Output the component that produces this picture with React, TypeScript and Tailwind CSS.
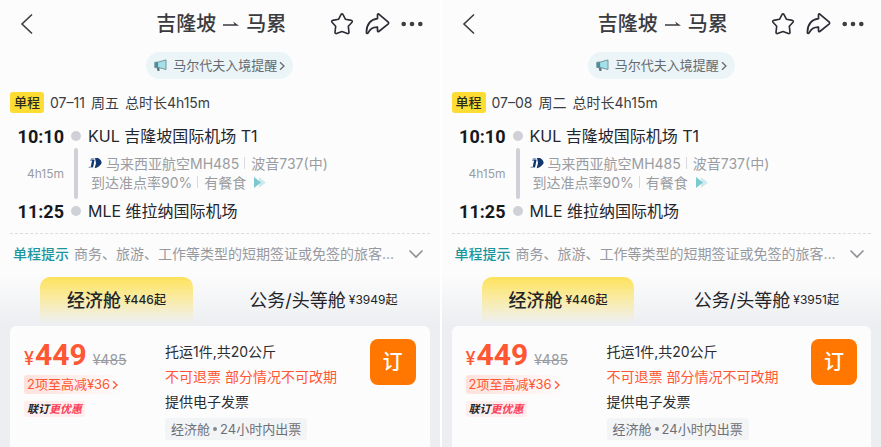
import React, { useState } from "react";

type Flight = {
  id: string;
  date: string;
  weekday: string;
  economyPrice: number;
  businessPrice: number;
};

const flights: Flight[] = [
  {
    id: "0711",
    date: "07–11",
    weekday: "周五",
    economyPrice: 446,
    businessPrice: 3949,
  },
  {
    id: "0708",
    date: "07–08",
    weekday: "周二",
    economyPrice: 446,
    businessPrice: 3951,
  },
];

const BackIcon = () => (
  <svg width="14" height="22" viewBox="0 0 14 22" fill="none">
    <path d="M12 1.5 2 11l10 9.5" stroke="#3c3d41" strokeWidth="1.6" />
  </svg>
);

const StarIcon = () => (
  <svg width="24" height="24" viewBox="0 0 24 24" fill="none">
    <path
      d="M11.100 2.400Q12 1.400 12.900 2.400L15.500 7.300 21.400 8.400Q22.900 8.900 22 10.200L18.300 14.200 19 20.300Q18.800 21.900 17.400 21.500L12 19.500 6.600 21.500Q5.200 21.900 5 20.300L5.700 14.200 2 10.200Q1.100 8.900 2.600 8.400L8.500 7.300Z"
      stroke="#2b2c35"
      strokeWidth="1.600"
      strokeLinejoin="round"
    />
  </svg>
);

const ShareIcon = () => (
  <svg width="25" height="24" viewBox="0 0 25 24" fill="none">
    <path
      d="M12.500 2.600q.2-1.100 1.300-.5l9.200 7.700q1.200 1.200 0 2.300l-9.200 7.400q-1.100.6-1.300-.6v-3.700c-4.200-.2-7.200 1.300-9.400 5.600-.5 1-1.700.9-1.700-.4.100-7.800 4.100-12.700 11.100-13.700Z"
      stroke="#2b2c35"
      strokeWidth="1.700"
      strokeLinejoin="round"
    />
  </svg>
);

const MoreIcon = () => (
  <svg width="22" height="6" viewBox="0 0 22 6" fill="#3c3d41">
    <circle cx="2.700" cy="3" r="2.300" />
    <circle cx="11" cy="3" r="2.300" />
    <circle cx="19.300" cy="3" r="2.300" />
  </svg>
);

const HornIcon = () => (
  <svg width="13" height="13" viewBox="0 0 13 13" fill="none">
    <path d="M.8 3.300 4.500 3v5.500H.8Z" fill="#3f93a3" />
    <path d="M4.500 3 12 .9v9.600L4.500 8.500Z" fill="#a5e0e9" />
    <path d="M2.500 8.500h3V12h-2Z" fill="#5d7780" />
    <path
      d="M.8 3.300 4.500 3 12 .9v9.600L4.500 8.500H.8V3.300Z"
      stroke="#6b8d95"
      strokeWidth=".9"
      strokeLinejoin="round"
    />
  </svg>
);

const ChevronRight = ({ color }: { color: string }) => (
  <svg width="6" height="10" viewBox="0 0 6 10" fill="none">
    <path d="m1 1.200 4 3.800-4 3.800" stroke={color} strokeWidth="1.300" />
  </svg>
);

const ChevronDown = () => (
  <svg width="16" height="10" viewBox="0 0 16 10" fill="none">
    <path d="m1.500 1.500 6.500 6.500 6.500-6.500" stroke="#8d9096" strokeWidth="1.600" />
  </svg>
);

const AirlineLogo = () => (
  <svg width="14" height="11" viewBox="0 0 14 11">
    <path
      d="M7 0h3c2.200 1 3.500 2.700 3.700 5-1.300 2.700-3.500 4.300-7 5.200L8 5Z"
      fill="#12366f"
    />
    <path d="M3 .3h3.500L5 9.800H.2l.8-1h2.200L4 3H2Z" fill="#7d95b8" />
    <path d="M4.200 2h2.300L5 9H2.800Z" fill="#12366f" />
  </svg>
);

const FastIcon = () => (
  <svg width="12" height="11" viewBox="0 0 12 11">
    <path d="m5 0 7 5.500L5 11Z" fill="#cdebee" />
    <path d="m0 0 7 5.500L0 11Z" fill="#7cc9d1" />
  </svg>
);

const Separator = () => (
  <span className="ml-[5px] mr-[6px] h-3 w-px bg-[#d9dade]" />
);

const Stop = ({ time, place }: { time: string; place: string }) => (
  <div className="flex h-6 items-center">
    <time className="w-14 text-right font-[Roboto] text-[18px] font-bold text-[#17181c]">
      {time}
    </time>
    <span className="mx-[7px] size-[10px] rounded-full bg-[#d0d1d8]" />
    <span className="text-base text-[#24262d]">{place}</span>
  </div>
);

const FlightPanel: React.FC<{ flight: Flight }> = ({ flight }) => {
  const [cabin, setCabin] = useState("economy");
  const [favorite, setFavorite] = useState(false);

  const cabins = [
    { key: "economy", name: "经济舱", price: flight.economyPrice },
    { key: "business", name: "公务/头等舱", price: flight.businessPrice },
  ];

  return (
    <section className="flex min-w-0 flex-col bg-[#eceef1]">
      <div className="bg-[#fcfcfc] px-2">
        <header className="grid h-12 grid-cols-[1fr_auto_1fr] items-center pl-3 pr-[9px]">
          <button aria-label="返回" className="justify-self-start">
            <BackIcon />
          </button>
          <h1 className="flex items-center gap-[7px] text-xl font-medium text-[#3a3b3f]">
            吉隆坡
            <svg width="16" height="8" viewBox="0 0 16 8">
              <path d="M0 4.200h11.500L10 1.500l6 4.300H0Z" fill="#3a3b3f" />
            </svg>
            马累
          </h1>
          <div className="flex items-center gap-[11px] justify-self-end">
            <button
              aria-label="收藏"
              aria-pressed={favorite}
              onClick={() => setFavorite(!favorite)}
            >
              <StarIcon />
            </button>
            <button aria-label="分享">
              <ShareIcon />
            </button>
            <button aria-label="更多">
              <MoreIcon />
            </button>
          </div>
        </header>

        <div className="flex justify-center pt-1">
          <a
            href="#entry"
            className="flex h-[27px] items-center gap-[2px] rounded-full bg-[#ebf5f7] px-2 text-[13px] text-[#666a70]"
          >
            <HornIcon />
            <span className="ml-1">马尔代夫入境提醒</span>
            <ChevronRight color="#666a70" />
          </a>
        </div>

        <div className="mt-[13px] flex h-[21px] items-center gap-[6px] pl-[2px] text-sm text-[#3b3d43]">
          <span className="flex h-full items-center rounded-[3px] bg-[#fddd33] px-1 text-[13px] font-medium text-[#2b2a20]">
            单程
          </span>
          <span>{flight.date}</span>
          <span>{flight.weekday}</span>
          <span>总时长4h15m</span>
        </div>

        <div className="mt-[11px]">
          <Stop time="10:10" place="KUL 吉隆坡国际机场 T1" />
          <div className="flex h-[51px] items-stretch">
            <span className="w-14 self-center text-right text-xs text-[#9a9ca2]">
              4h15m
            </span>
            <span className="mx-[10px] w-1 rounded-full bg-[#d0d1d8]" />
            <div className="flex flex-col justify-center pb-[2px] text-sm leading-[19px] text-[#9a9ca2]">
              <div className="flex items-center">
                <AirlineLogo />
                <span className="ml-1">马来西亚航空MH485</span>
                <Separator />
                <span>波音737(中)</span>
              </div>
              <div className="flex items-center pl-[3px]">
                <span>到达准点率90%</span>
                <Separator />
                <span className="mr-2">有餐食</span>
                <FastIcon />
              </div>
            </div>
          </div>
          <Stop time="11:25" place="MLE 维拉纳国际机场" />
        </div>

        <div className="mx-[2px] mt-[10px] border-t border-dashed border-[#dcdde0]" />

        <div className="flex h-10 items-center gap-[5px] pl-[5px] pr-2 text-sm">
          <strong className="shrink-0 font-medium text-[#1b969f]">
            单程提示
          </strong>
          <p className="flex-1 whitespace-nowrap text-[#97999f]">
            商务、旅游、工作等类型的短期签证或免签的旅客...
          </p>
          <button aria-label="展开" className="shrink-0">
            <ChevronDown />
          </button>
        </div>
      </div>

      <div
        role="tablist"
        className="grid grid-cols-[153fr_227fr] bg-linear-to-b from-[#fcfcfc] to-[#eceef1] pb-[3px] pl-10 pr-5 pt-[3px]"
      >
        {cabins.map(({ key, name, price }) => (
          <button
            key={key}
            role="tab"
            aria-selected={cabin === key}
            onClick={() => setCabin(key)}
            className={`flex h-[46px] items-center gap-[3px] text-[#222429] ${
              cabin === key
                ? "justify-center rounded-t-[10px] bg-linear-to-b from-[#fde25b] to-[#fde25b]/0 font-medium"
                : "justify-end pr-[22px]"
            }`}
          >
            <span className="text-[18px]">{name}</span>
            <span className="text-xs">¥{price}起</span>
          </button>
        ))}
      </div>

      <article className="mx-[10px] flex flex-1 items-start rounded-t-md bg-[#fcfcfc] px-[14px] pb-[7px] pt-[13px]">
        <div className="w-[141px] shrink-0">
          <div className="flex h-8 items-baseline gap-px text-[#ff5733]">
            <span className="text-[18px] font-medium">¥</span>
            <strong className="font-[Roboto] text-[30px] font-bold leading-8">
              449
            </strong>
            <del className="ml-[5px] text-sm text-[#999ba1]">¥485</del>
          </div>
          <a
            href="#discount"
            className="mt-1 flex h-[19px] w-[98px] items-center gap-[2px] rounded-[3px] bg-linear-to-r from-[#ffe1dc] to-[#ffe1dc]/0 pl-[3px] text-[13px] text-[#ff5733]"
          >
            <span className="whitespace-nowrap">2项至高减¥36</span>
            <ChevronRight color="#ff5733" />
          </a>
          <div className="mt-[7px] flex h-4 w-fit items-center rounded-[3px] bg-[#ffeeee] px-[3px] text-[11px] font-bold italic text-[#222429]">
            联订<span className="text-[#fc3e58]">更优惠</span>
          </div>
        </div>

        <div className="min-w-0 flex-1 text-sm leading-[25px] text-[#2b2d33]">
          <p>托运1件,共20公斤</p>
          <p className="text-[#ff5733]">不可退票 部分情况不可改期</p>
          <p>提供电子发票</p>
          <p className="mt-1 flex h-[22px] w-fit items-center gap-[3px] rounded-[3px] bg-[#f3f4f6] px-[6px] text-[13px] text-[#6d7077]">
            经济舱
            <span className="size-1 rounded-full bg-[#85888e]" />
            24小时内出票
          </p>
        </div>

        <button className="size-[46px] shrink-0 rounded-lg bg-[#ff7700] text-xl font-medium text-white">
          订
        </button>
      </article>
    </section>
  );
};

export default function App() {
  return (
    <main className="grid min-h-screen grid-cols-2 gap-[2px] bg-white font-[Inter,'Noto_Sans_CJK_SC',sans-serif]">
      {flights.map((flight) => (
        <FlightPanel key={flight.id} flight={flight} />
      ))}
    </main>
  );
}
